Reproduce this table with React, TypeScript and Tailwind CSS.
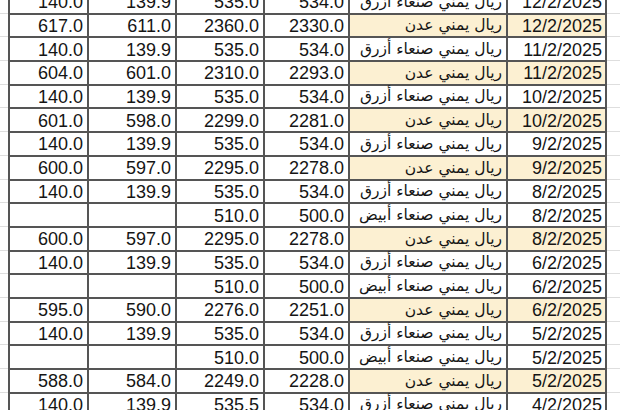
import React from "react";

const AZ = "ريال يمني صنعاء أزرق";
const AD = "ريال يمني عدن";
const AB = "ريال يمني صنعاء أبيض";

type Row = [string, string, string, string, string, string, boolean];

const rows: Row[] = [
  ["140.0", "139.9", "535.0", "534.0", AZ, "12/2/2025", false],
  ["617.0", "611.0", "2360.0", "2330.0", AD, "12/2/2025", true],
  ["140.0", "139.9", "535.0", "534.0", AZ, "11/2/2025", false],
  ["604.0", "601.0", "2310.0", "2293.0", AD, "11/2/2025", true],
  ["140.0", "139.9", "535.0", "534.0", AZ, "10/2/2025", false],
  ["601.0", "598.0", "2299.0", "2281.0", AD, "10/2/2025", true],
  ["140.0", "139.9", "535.0", "534.0", AZ, "9/2/2025", false],
  ["600.0", "597.0", "2295.0", "2278.0", AD, "9/2/2025", true],
  ["140.0", "139.9", "535.0", "534.0", AZ, "8/2/2025", false],
  ["", "", "510.0", "500.0", AB, "8/2/2025", false],
  ["600.0", "597.0", "2295.0", "2278.0", AD, "8/2/2025", true],
  ["140.0", "139.9", "535.0", "534.0", AZ, "6/2/2025", false],
  ["", "", "510.0", "500.0", AB, "6/2/2025", false],
  ["595.0", "590.0", "2276.0", "2251.0", AD, "6/2/2025", true],
  ["140.0", "139.9", "535.0", "534.0", AZ, "5/2/2025", false],
  ["", "", "510.0", "500.0", AB, "5/2/2025", false],
  ["588.0", "584.0", "2249.0", "2228.0", AD, "5/2/2025", true],
  ["140.0", "139.9", "535.5", "534.0", AZ, "4/2/2025", false],
];

function Num({ v, w }: { v: string; w: string }) {
  return (
    <div
      className={`${w} shrink-0 border-l-2 border-[#555] flex items-center justify-end pr-[4px] pt-[2px] text-[18px] text-[#151515]`}
      style={{ fontFamily: '"Liberation Sans", Arial, sans-serif' }}
    >
      {v}
    </div>
  );
}

export default function App() {
  return (
    <div className="w-[620px] h-[410px] overflow-hidden bg-white">
      <div className="-mt-[11px]">
        {rows.map((r, i) => (
          <div key={i} className="flex h-[23.7px] border-t border-[#dedede]">
            <div className="w-[8px] shrink-0" />
            <div className="flex -mt-px border-t-2 border-[#555]">
              <Num v={r[0]} w="w-[79px]" />
              <Num v={r[1]} w="w-[88px]" />
              <Num v={r[2]} w="w-[88px]" />
              <Num v={r[3]} w="w-[85px]" />
              <div
                dir="rtl"
                className={`w-[158px] shrink-0 border-l-2 border-[#555] flex items-center justify-start pr-[4px] pt-[1px] text-[15.5px] text-[#151515] ${
                  r[6] ? "bg-[#fcf0d2]" : ""
                }`}
                style={{ fontFamily: '"DejaVu Sans", sans-serif' }}
              >
                {r[4]}
              </div>
              <div
                className={`w-[101px] shrink-0 border-l-2 border-r-2 border-[#555] flex items-center justify-end pr-[3px] pt-[2px] text-[18px] text-[#151515] ${
                  r[6] ? "bg-[#fcf0d2]" : ""
                }`}
                style={{ fontFamily: '"Liberation Sans", Arial, sans-serif' }}
              >
                {r[5]}
              </div>
            </div>
            <div className="flex-1" />
          </div>
        ))}
      </div>
    </div>
  );
}
